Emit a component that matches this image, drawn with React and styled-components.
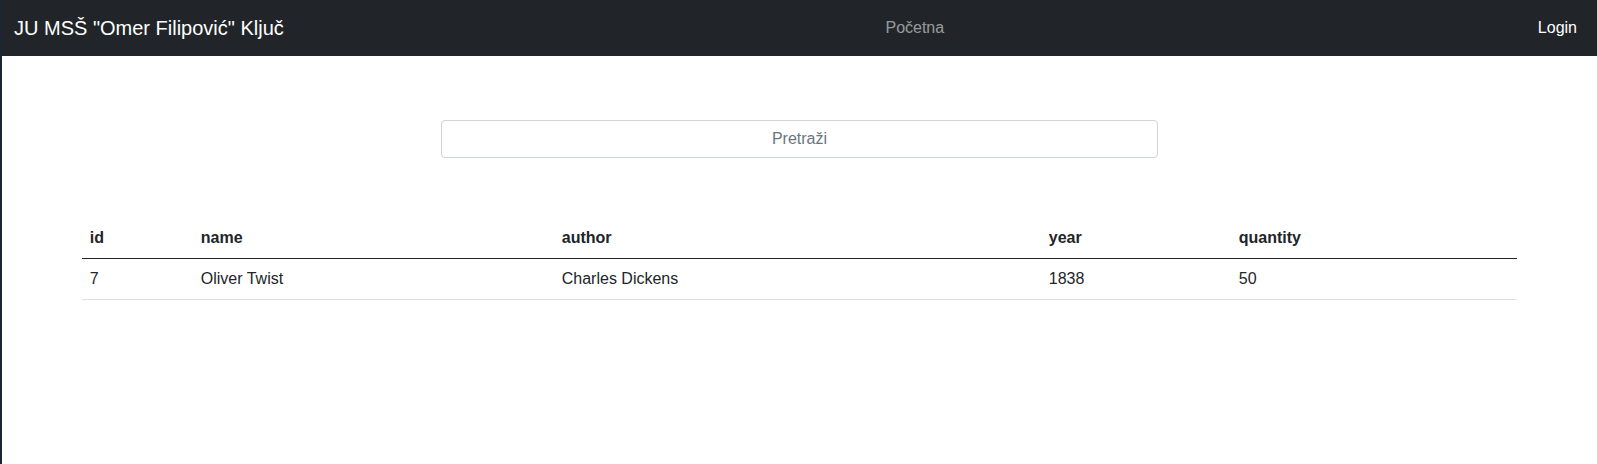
import React from "react";
import styled, { createGlobalStyle } from "styled-components";

const GlobalStyle = createGlobalStyle`
  * { box-sizing: border-box; }
  body {
    margin: 0;
    background: #fff;
    border-left: 2px solid #1c2533;
    font-family: "Liberation Sans", Arial, Helvetica, sans-serif;
    font-size: 16px;
    line-height: 1.5;
    color: #212529;
    min-height: 464px;
  }
`;

const books = [
  { id: 7, name: "Oliver Twist", author: "Charles Dickens", year: 1838, quantity: 50 },
];

const columns = [
  { key: "id", width: "111px" },
  { key: "name", width: "361px" },
  { key: "author", width: "487px" },
  { key: "year", width: "190px" },
  { key: "quantity", width: "auto" },
];

const App = () => {
  return (
    <>
      <GlobalStyle />
      <Navbar>
        <Brand href="#">JU MSŠ "Omer Filipović" Ključ</Brand>
        <NavList $center>
          <NavLink href="#">Početna</NavLink>
        </NavList>
        <NavList>
          <NavLink href="#" $active>
            Login
          </NavLink>
        </NavList>
      </Navbar>
      <Main>
        <SearchInput type="text" placeholder="Pretraži" />
        <Table>
          <colgroup>
            {columns.map((c) => (
              <col key={c.key} style={{ width: c.width }} />
            ))}
          </colgroup>
          <thead>
            <tr>
              {columns.map((c) => (
                <Th key={c.key}>{c.key}</Th>
              ))}
            </tr>
          </thead>
          <tbody>
            {books.map((b) => (
              <tr key={b.id}>
                {columns.map((c) => (
                  <Td key={c.key}>{b[c.key]}</Td>
                ))}
              </tr>
            ))}
          </tbody>
        </Table>
      </Main>
    </>
  );
};

export default App;

const Navbar = styled.nav`
  display: flex;
  align-items: center;
  height: 56px;
  padding: 8px 12px;
  background-color: #212529;
`;

const Brand = styled.a`
  font-size: 20px;
  line-height: 30px;
  padding: 5px 0;
  margin-right: 16px;
  color: #fff;
  text-decoration: none;
  white-space: nowrap;
`;

const NavList = styled.div`
  display: flex;
  margin: ${(p) => (p.$center ? "0 auto" : "0")};
`;

const NavLink = styled.a`
  padding: 8px;
  font-size: 16px;
  line-height: 24px;
  color: ${(p) => (p.$active ? "#fff" : "rgba(255, 255, 255, 0.55)")};
  text-decoration: none;
`;

const Main = styled.main`
  display: flex;
  flex-direction: column;
  align-items: center;
  padding-top: 64px;
`;

const SearchInput = styled.input`
  width: 45%;
  height: 38px;
  padding: 6px 12px;
  font-family: inherit;
  font-size: 16px;
  color: #212529;
  text-align: center;
  background: #fff;
  border: 1px solid #ced4da;
  border-radius: 4px;
  outline: none;

  &::placeholder {
    color: #6c757d;
  }
`;

const Table = styled.table`
  width: 90%;
  margin-top: 60px;
  border-collapse: collapse;
  table-layout: fixed;
`;

const Th = styled.th`
  padding: 8px;
  text-align: left;
  font-weight: 700;
  border-bottom: 1px solid #212529;
`;

const Td = styled.td`
  padding: 8px;
  border-bottom: 1px solid #dee2e6;
`;
